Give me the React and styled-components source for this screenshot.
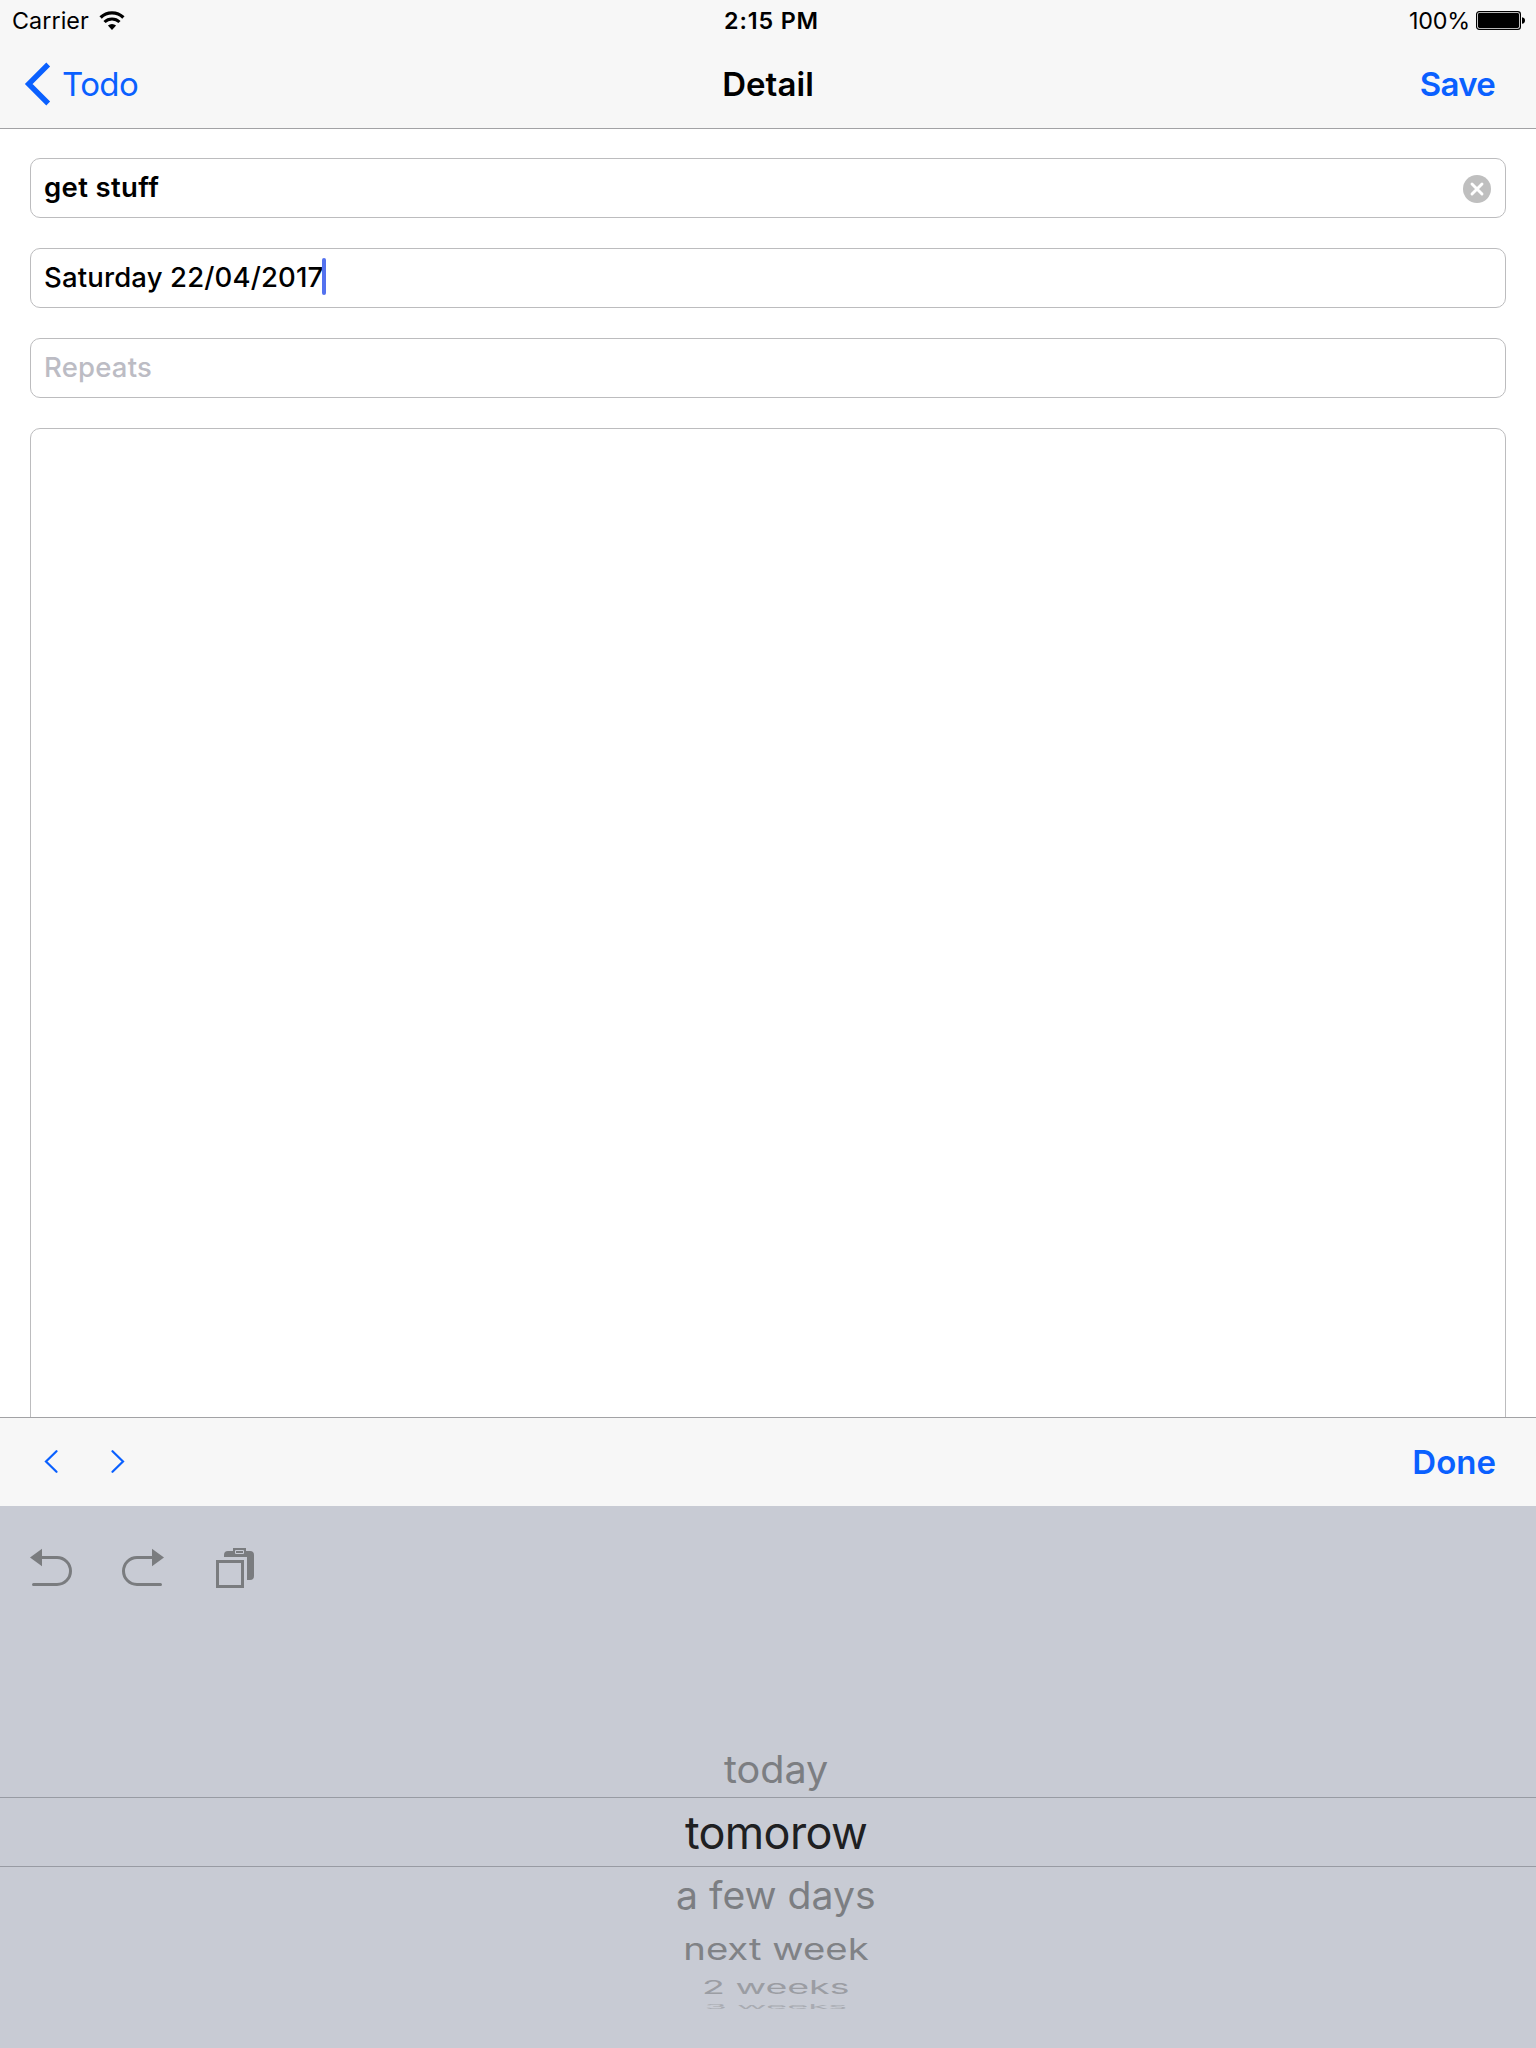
import React from 'react';
import styled, { createGlobalStyle } from 'styled-components';

const BLUE = '#0a60ff';
const ICON = '#7a7c7f';

const GlobalStyle = createGlobalStyle`
  * { box-sizing: border-box; }
  body {
    margin: 0;
    background: #fff;
    color: #000;
    font-family: Inter, 'Liberation Sans', sans-serif;
  }
  svg { display: block; flex: none; }
`;

const Screen = styled.div`
  width: 1536px;
  height: 2048px;
  display: flex;
  flex-direction: column;
  overflow: hidden;
`;

const Header = styled.header`
  height: 129px;
  flex: none;
  background: #f7f7f7;
  border-bottom: 1px solid #a2a2a5;
`;

const StatusBar = styled.div`
  height: 40px;
  padding: 1px 11px 0 12px;
  display: grid;
  grid-template-columns: 1fr auto 1fr;
  align-items: center;
  font-size: 23.3px;
  line-height: 28px;
`;

const Carrier = styled.div`
  display: flex;
  align-items: center;
  gap: 10.5px;
  letter-spacing: 0.07px;
`;

const Clock = styled.div`
  padding-left: 6px;
  font-weight: 600;
  letter-spacing: 0.86px;
`;

const Battery = styled.div`
  display: flex;
  align-items: center;
  justify-content: flex-end;
  gap: 6px;
  letter-spacing: -0.2px;
`;

const NavBar = styled.nav`
  height: 88px;
  padding: 0 41px 0 24px;
  display: grid;
  grid-template-columns: 1fr auto 1fr;
  align-items: center;
  font-size: 33px;
  line-height: 40px;
`;

const BarButton = styled.button`
  display: flex;
  align-items: center;
  justify-self: ${(p) => p.$align || 'start'};
  gap: 11px;
  padding: 0;
  border: 0;
  background: none;
  color: ${BLUE};
  font: inherit;
  font-size: 33px;
  line-height: 40px;
  font-weight: ${(p) => (p.$strong ? 600 : 400)};
  letter-spacing: ${(p) => p.$tracking || 0}px;
`;

const Title = styled.h1`
  margin: 0;
  padding-left: 17px;
  font: inherit;
  font-weight: 600;
  letter-spacing: 0.05px;
`;

const Form = styled.main`
  flex: 1;
  min-height: 0;
  padding: 29px 30px 0;
  display: flex;
  flex-direction: column;
  gap: 30px;
  overflow: hidden;
`;

const Field = styled.div`
  height: 60px;
  flex: none;
  padding: 0 14px 2px 13px;
  display: flex;
  align-items: center;
  border: 1px solid #bcbcbe;
  border-radius: 10px;
  font-size: 27.5px;
  line-height: 34px;
  white-space: pre;
  font-weight: ${(p) => p.$weight || 500};
  letter-spacing: ${(p) => p.$tracking || 0}px;
  color: ${(p) => (p.$placeholder ? '#bcbcc4' : '#000')};
`;

const ClearButton = styled.span`
  margin: 4px 0 0 auto;
`;

const Caret = styled.span`
  width: 4px;
  height: 37px;
  margin: 0 0 1px -1px;
  border-radius: 2px;
  background: #5472ef;
`;

const Notes = styled.div`
  height: 1200px;
  flex: none;
  border: 1px solid #bcbcbe;
  border-radius: 10px;
`;

const Accessory = styled.div`
  height: 89px;
  flex: none;
  padding: 0 40px 0 44px;
  display: flex;
  align-items: center;
  gap: 53px;
  background: #f7f7f7;
  border-top: 1px solid #a2a2a5;
`;

const Spacer = styled.span`
  flex: 1;
`;

const Keyboard = styled.section`
  height: 542px;
  flex: none;
  background: #c8cbd4;
`;

const Shortcuts = styled.div`
  height: 235px;
  padding: 38px 0 0 28px;
  display: flex;
  align-items: flex-start;
  gap: 46px;
`;

const Picker = styled.div`
  display: flex;
  flex-direction: column;
`;

const Option = styled.div`
  height: ${(p) => p.$height}px;
  flex: none;
  padding: 0 0 ${(p) => p.$lift || 0}px 16px;
  display: flex;
  align-items: center;
  justify-content: center;
  color: ${(p) => p.$color};
  font-size: 38px;
`;

const Selected = styled(Option)`
  border-top: 1px solid #989ba3;
  border-bottom: 1px solid #989ba3;
  font-size: 45px;
`;

const Label = styled.span`
  flex: none;
  line-height: 1;
  white-space: pre;
  letter-spacing: ${(p) => p.$tracking || 0}px;
  transform: scale(${(p) => p.$sx || 1}, ${(p) => p.$sy || 1});
  transform-origin: 50% 86.4%;
`;

const WifiIcon = () => (
  <svg width="26" height="20" viewBox="0 0 26 20" fill="none" stroke="#000">
    <path d="M1.6 6.5a16.3 16.3 0 0 1 22.8 0" strokeWidth="3.3" />
    <path d="M5.5 11a10.8 10.8 0 0 1 15 0" strokeWidth="3.1" />
    <path d="M13 19L8.9 14.6a6 6 0 0 1 8.2 0z" fill="#000" stroke="none" />
  </svg>
);

const BatteryIcon = () => (
  <svg width="49" height="20" viewBox="0 0 49 20">
    <rect x="0.6" y="0.6" width="43.8" height="17.8" rx="2.6" fill="none" stroke="#000" strokeWidth="1.2" />
    <rect x="2" y="2" width="41" height="15" rx="1.4" fill="#000" />
    <path d="M46 6.2c2 .3 3 1.5 3 3.3s-1 3-3 3.3z" fill="#000" />
  </svg>
);

const BackIcon = () => (
  <svg width="27" height="44" viewBox="0 0 27 44" fill="none" stroke={BLUE} strokeWidth="5.4">
    <path d="M24.2 2.500L4.700 22l19.500 19.500" />
  </svg>
);

const ClearIcon = () => (
  <svg width="28" height="28" viewBox="0 0 28 28">
    <circle cx="14" cy="14" r="14" fill="#bfbfbf" />
    <path d="M9 9l10 10M19 9L9 19" stroke="#fff" strokeWidth="2.9" strokeLinecap="round" />
  </svg>
);

const ArrowIcon = ({ next }) => (
  <svg width="14" height="24" viewBox="0 0 14 24" fill="none" stroke={BLUE} strokeWidth="2.2" strokeLinecap="round">
    <path d={next ? 'M1.500 1.200L12 11.500 1.500 21.800' : 'M12.500 1.200L2 11.500l10.500 10.300'} />
  </svg>
);

const UndoIcon = ({ redo }) => (
  <svg width="46" height="44" viewBox="0 0 46 44">
    <g transform={redo ? 'translate(46 0) scale(-1 1)' : undefined}>
      <path d="M2 13.500L14 4.800v17.400z" fill={ICON} />
      <path
        d="M13 13.500h16a13.500 13.500 0 0 1 0 27H5.500"
        fill="none"
        stroke={ICON}
        strokeWidth="3"
        strokeLinecap="round"
      />
    </g>
  </svg>
);

const PasteIcon = () => (
  <svg width="43" height="44" viewBox="-3 0 43 44">
    <path d="M9 13V11a4 4 0 0 1 4-4h22a4 4 0 0 1 4 4v21a4 4 0 0 1-4 4h-3V13z" fill={ICON} />
    <path d="M18 4h13v7H18z" fill={ICON} />
    <path d="M20.500 6.500h8v3h-8z" fill={ICON} stroke="#c8cbd4" strokeWidth="1" />
    <path d="M2.500 17.500h25v25h-25z" fill="none" stroke={ICON} strokeWidth="3" />
  </svg>
);

export default function App() {
  return (
    <>
      <GlobalStyle />
      <Screen>
        <Header>
          <StatusBar>
            <Carrier>
              Carrier
              <WifiIcon />
            </Carrier>
            <Clock>2:15 PM</Clock>
            <Battery>
              100%
              <BatteryIcon />
            </Battery>
          </StatusBar>
          <NavBar>
            <BarButton $tracking={-0.57}>
              <BackIcon />
              Todo
            </BarButton>
            <Title>Detail</Title>
            <BarButton $strong $align="end" $tracking={-0.75}>
              Save
            </BarButton>
          </NavBar>
        </Header>
        <Form>
          <Field $weight={600} $tracking={0.36}>
            get stuff
            <ClearButton>
              <ClearIcon />
            </ClearButton>
          </Field>
          <Field $tracking={0.15}>
            Saturday 22/04/2017
            <Caret />
          </Field>
          <Field $placeholder $tracking={0.2}>
            Repeats
          </Field>
          <Notes />
        </Form>
        <Accessory>
          <ArrowIcon />
          <ArrowIcon next />
          <Spacer />
          <BarButton $strong>Done</BarButton>
        </Accessory>
        <Keyboard>
          <Shortcuts>
            <UndoIcon />
            <UndoIcon redo />
            <PasteIcon />
          </Shortcuts>
          <Picker>
            <Option $height={56} $color="#7c7e82">
              <Label $sx={1.042}>today</Label>
            </Option>
            <Selected $height={70} $color="#1e2022">
              <Label $tracking={-0.68}>tomorow</Label>
            </Selected>
            <Option $height={56} $color="#7c7e82">
              <Label $sx={1.03}>a few days</Label>
            </Option>
            <Option $height={46} $color="#808286">
              <Label $sx={1.008} $sy={0.79}>next week</Label>
            </Option>
            <Option $height={22} $color="#9b9da3">
              <Label $sx={0.986} $sy={0.487}>2 weeks</Label>
            </Option>
            <Option $height={17} $lift={10} $color="#a9abb2">
              <Label $sx={0.952} $sy={0.165}>3 weeks</Label>
            </Option>
          </Picker>
        </Keyboard>
      </Screen>
    </>
  );
}
